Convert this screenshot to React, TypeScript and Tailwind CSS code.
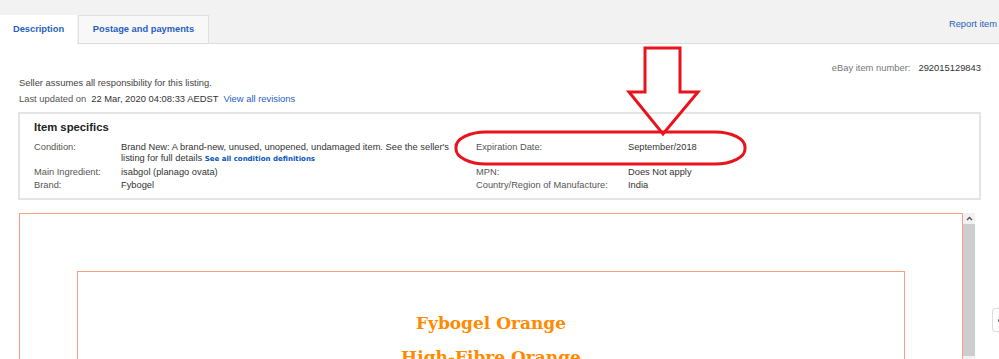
import React from "react"

const specs = [
  {
    label: "Condition:",
    value: (
      <>
        Brand New: A brand-new, unused, unopened, undamaged item. See the seller's listing for full details{" "}
        <a className="font-['DejaVu_Sans',sans-serif] text-[7px] font-bold text-[#0654ba]">See all condition definitions</a>
      </>
    ),
    label2: "Expiration Date:",
    value2: "September/2018",
  },
  { label: "Main Ingredient:", value: "isabgol (planago ovata)", label2: "MPN:", value2: "Does Not apply" },
  { label: "Brand:", value: "Fybogel", label2: "Country/Region of Manufacture:", value2: "India" },
]

function TabBar() {
  return (
    <div className="flex h-[44px] items-end border-b border-[#dcdcdc] bg-[#f2f2f2]">
      <div className="-mb-px flex h-[29px] w-[77px] items-center justify-center bg-white text-[9.3px] font-bold text-[#1f5fbf]">
        Description
      </div>
      <div className="ml-px flex h-[28px] w-[131px] items-center justify-center border border-b-0 border-[#e0e0e0] bg-[#f8f8f8] text-[9.3px] font-bold text-[#1f5fbf]">
        Postage and payments
      </div>
      <a className="mr-[2px] mb-[11px] ml-auto text-[9.3px] text-[#1f5fbf]">Report item</a>
    </div>
  )
}

function ItemSpecifics() {
  return (
    <div className="mt-[7px] border-2 border-[#e4e4e4] pt-[5px] pb-[6px] pl-[14px]">
      <h3 className="text-[11.3px] leading-[16px] font-bold text-[#222]">Item specifics</h3>
      <div className="mt-[6px] grid grid-cols-[87px_355px_152px_1fr] text-[9.3px] leading-[11px]">
        {specs.map((row) => (
          <React.Fragment key={row.label}>
            <div className="py-px text-[#555]">{row.label}</div>
            <div className="py-px pr-[27px] text-justify text-[#333]">{row.value}</div>
            <div className="py-px text-[#555]">{row.label2}</div>
            <div className="py-px text-[#333]">{row.value2}</div>
          </React.Fragment>
        ))}
      </div>
    </div>
  )
}

function DescriptionFrame() {
  return (
    <div className="mt-[13px] ml-px flex w-[956px]">
      <div className="h-[200px] w-[944px] border border-[#f9a080] px-[57px] pt-[57px]">
        <div className="h-[140px] border border-[#f9a080] pt-[39px] text-center font-['DejaVu_Serif',Georgia,serif] font-bold text-[#ff8a00]">
          <p className="text-[17px] leading-[24px]">Fybogel Orange</p>
          <p className="mt-[10px] text-[17px] leading-[24px]">High-Fibre Orange</p>
        </div>
      </div>
      <div className="flex w-[12px] flex-col bg-[#f1f1f1]">
        <div className="flex h-[11px] items-center justify-center">
          <svg width="7" height="5" viewBox="0 0 7 5">
            <path d="M1 4 L3.5 1.5 L6 4" fill="none" stroke="#505050" strokeWidth="1.3" />
          </svg>
        </div>
        <div className="h-[132px] bg-[#cdcdcd]" />
      </div>
    </div>
  )
}

export default function App() {
  return (
    <div className="relative h-[359px] w-[999px] overflow-hidden bg-white font-['Liberation_Sans',Arial,sans-serif]">
      <TabBar />
      <div className="px-[18px]">
        <div className="mt-[17px] text-right text-[9.4px] leading-[13px]">
          <span className="text-[#767676]">eBay item number:</span>
          <span className="ml-[8px] text-[#333]">292015129843</span>
        </div>
        <p className="mt-[2px] ml-px text-[9.4px] leading-[13px] text-[#444]">Seller assumes all responsibility for this listing.</p>
        <p className="mt-[3px] ml-px text-[9.4px] leading-[13px] text-[#555]">
          Last updated on
          <span className="ml-[5px] text-[#333]">22 Mar, 2020 04:08:33 AEDST</span>
          <a className="ml-[5px] text-[#1f5fbf]">View all revisions</a>
        </p>
        <ItemSpecifics />
        <DescriptionFrame />
      </div>

      {/* annotation drawn over the screenshot */}
      <svg className="pointer-events-none absolute top-0 left-0" width="999" height="359">
        <path
          d="M645 48 L680 48 L680 92 L698 92 L663 134 L629 92 L645 92 Z"
          fill="none"
          stroke="#e8131c"
          strokeWidth="3"
          strokeLinejoin="miter"
        />
        <rect x="456" y="132" width="289" height="32" rx="30" ry="15" fill="none" stroke="#e8131c" strokeWidth="3" />
      </svg>

      <div className="absolute top-[308px] left-[992px] flex h-[24px] w-[20px] items-center rounded-l-[3px] border border-[#dddddd] bg-white pl-[5px]">
        <span className="h-[3px] w-[3px] rounded-full bg-[#555]" />
      </div>
    </div>
  )
}
